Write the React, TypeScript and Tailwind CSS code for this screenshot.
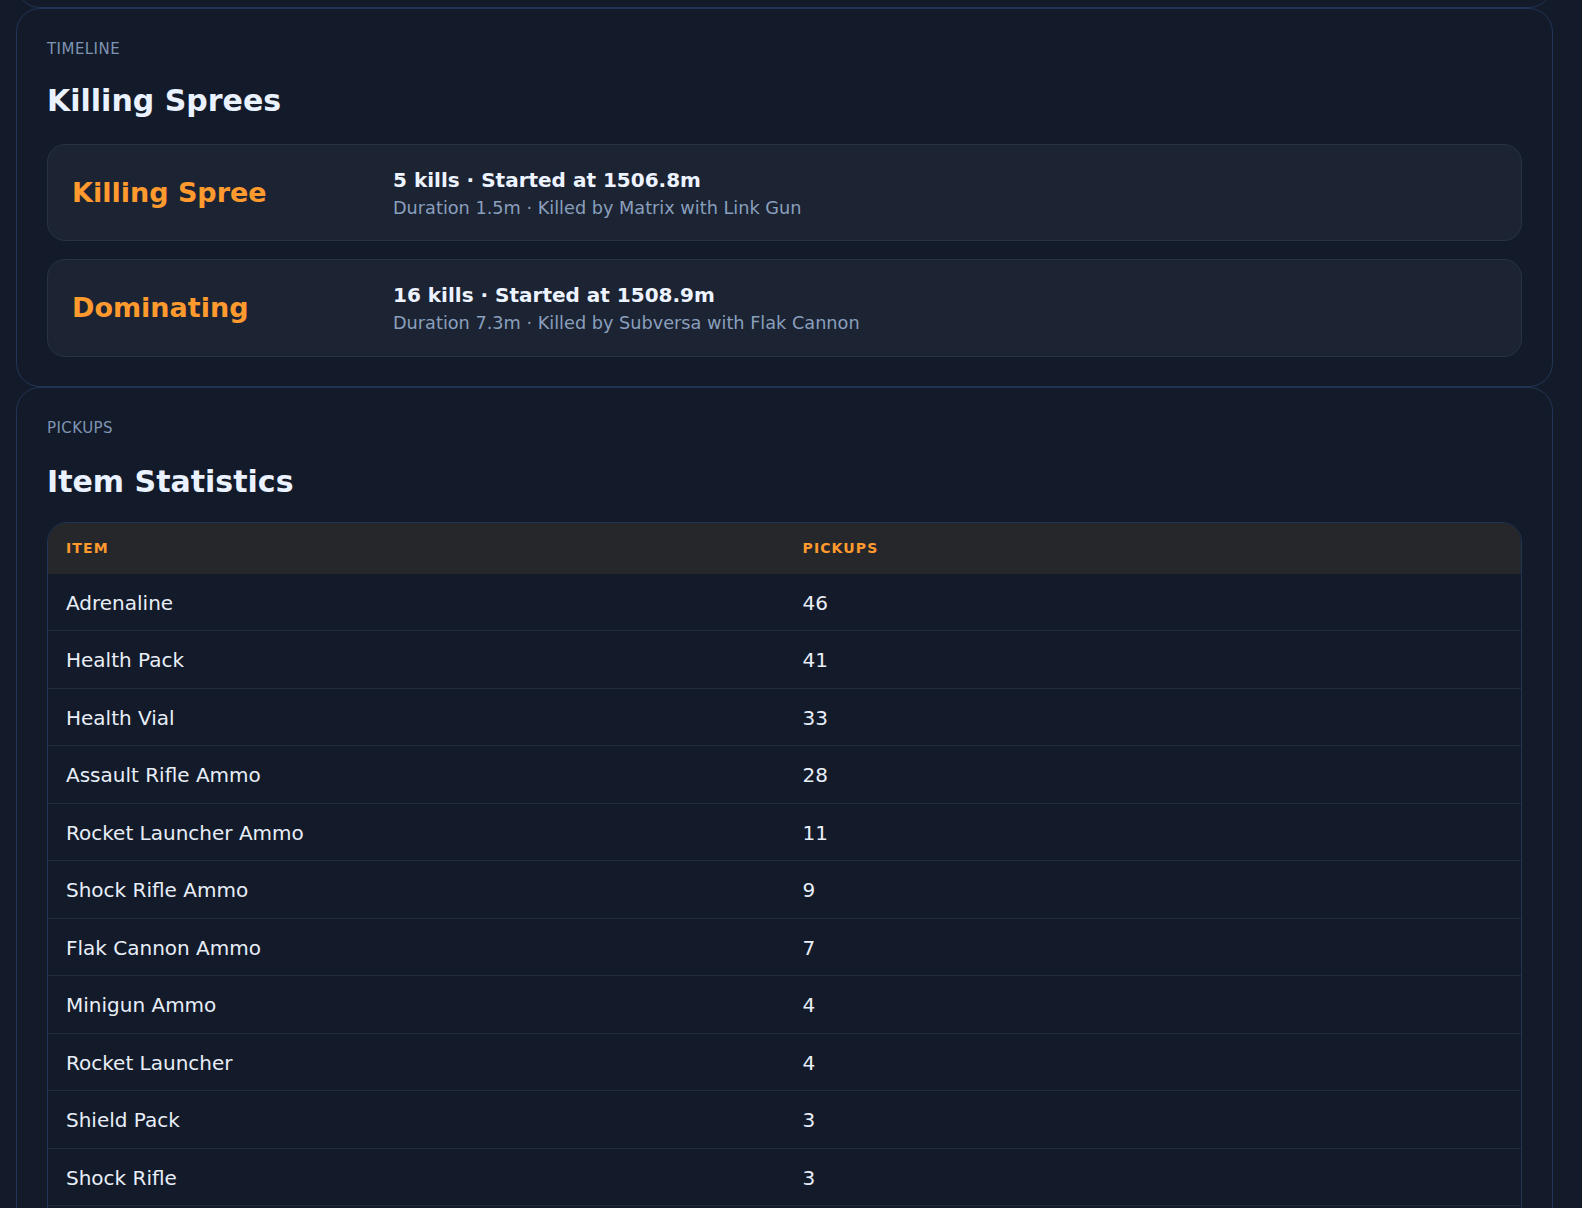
import React from "react";

const sprees = [
  {
    name: "Killing Spree",
    main: "5 kills · Started at 1506.8m",
    sub: "Duration 1.5m · Killed by Matrix with Link Gun",
  },
  {
    name: "Dominating",
    main: "16 kills · Started at 1508.9m",
    sub: "Duration 7.3m · Killed by Subversa with Flak Cannon",
  },
];

const items: [string, number][] = [
  ["Adrenaline", 46],
  ["Health Pack", 41],
  ["Health Vial", 33],
  ["Assault Rifle Ammo", 28],
  ["Rocket Launcher Ammo", 11],
  ["Shock Rifle Ammo", 9],
  ["Flak Cannon Ammo", 7],
  ["Minigun Ammo", 4],
  ["Rocket Launcher", 4],
  ["Shield Pack", 3],
  ["Shock Rifle", 3],
  ["Bio Rifle Ammo", 2],
  ["Link Gun Ammo", 2],
];

export default function App() {
  return (
    <div
      className="h-[1208px] overflow-hidden bg-[#131b2a] text-[#e8eef8]"
      style={{ fontFamily: '"DejaVu Sans", Verdana, sans-serif' }}
    >
      <div className="ml-[16px] mr-[29px]">
        {/* previous card, mostly off-screen */}
        <div className="-mt-[200px] h-[208px] rounded-[24px] border border-[#1f3555]" />

        {/* Timeline card */}
        <section className="rounded-[24px] border border-[#1f3555] px-[30px] pt-[30px] pb-[29px]">
          <div className="text-[15px] leading-[20px] tracking-[0.03em] text-[#7f94b3]">
            TIMELINE
          </div>
          <h2 className="mt-[24px] text-[30px] font-bold leading-[36px] text-[#eaf2ff]">
            Killing Sprees
          </h2>
          <div className="mt-[25px] flex flex-col gap-[18px]">
            {sprees.map((s) => (
              <div
                key={s.name}
                className="grid grid-cols-[297px_1fr] items-center gap-6 rounded-[18px] border border-[#283244] bg-[#1c2434] px-[24px] py-[19.5px]"
              >
                <div className="text-[27px] font-bold leading-[36px] text-[#ff9a2e]">
                  {s.name}
                </div>
                <div>
                  <div className="text-[20px] font-bold leading-[30px] text-[#eef4ff]">
                    {s.main}
                  </div>
                  <div className="text-[17.7px] leading-[26.4px] text-[#8a9fbc]">
                    {s.sub}
                  </div>
                </div>
              </div>
            ))}
          </div>
        </section>

        {/* Pickups card */}
        <section className="rounded-[24px] border border-[#1f3555] p-[30px]">
          <div className="text-[15px] leading-[20px] tracking-[0.03em] text-[#7f94b3]">
            PICKUPS
          </div>
          <h2 className="mt-[26px] text-[30px] font-bold leading-[36px] text-[#eaf2ff]">
            Item Statistics
          </h2>
          <div className="mt-[22px] overflow-hidden rounded-t-[20px] border border-[#1f3555]">
            <div className="grid grid-cols-2 bg-[#26272b]">
              <div className="px-[18px] py-[15.5px] text-[14px] font-bold leading-[20px] tracking-[0.08em] text-[#ff9a2e]">
                ITEM
              </div>
              <div className="px-[18px] py-[15.5px] text-[14px] font-bold leading-[20px] tracking-[0.08em] text-[#ff9a2e]">
                PICKUPS
              </div>
            </div>
            {items.map(([name, n]) => (
              <div
                key={name}
                className="grid grid-cols-2 border-b border-[#222b3a] text-[20px] leading-[28.5px]"
              >
                <div className="px-[18px] pt-[15px] pb-[13px]">{name}</div>
                <div className="px-[18px] pt-[15px] pb-[13px]">{n}</div>
              </div>
            ))}
          </div>
        </section>
      </div>
    </div>
  );
}
